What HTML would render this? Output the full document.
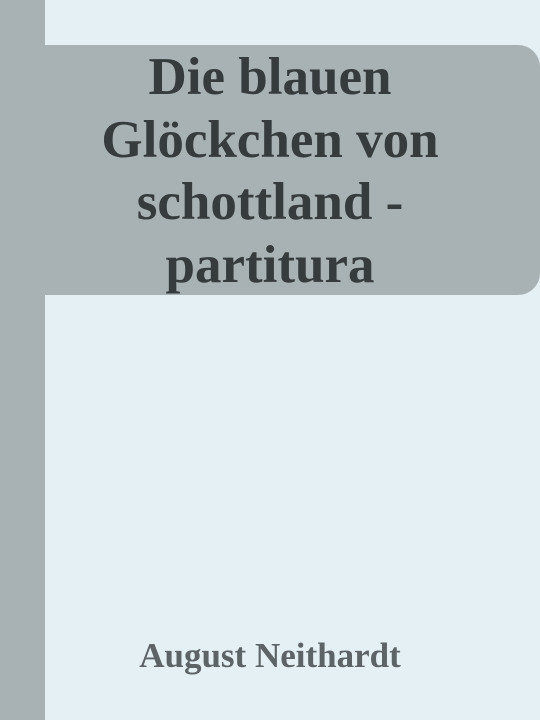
<!DOCTYPE html>
<html><head><meta charset="utf-8"><style>
html,body{margin:0;padding:0}
body{width:540px;height:720px;background:#e5f0f5;position:relative;overflow:hidden;font-family:"Liberation Serif",serif}
.bar{position:absolute;left:0;top:0;width:45px;height:720px;background:#a8b1b3}
.box{position:absolute;left:45px;top:45px;width:495px;height:250px;background:#a8b1b3;border-radius:0 22px 22px 0}
.title{position:absolute;left:45px;top:46px;width:450px;text-align:center;font-weight:bold;font-size:53px;line-height:62.5px;color:#363b3e}
.author{position:absolute;left:45px;top:636px;width:450px;text-align:center;font-weight:bold;font-size:35px;color:#5d6467}
</style></head><body>
<div class="bar"></div>
<div class="box"></div>
<div class="title">Die blauen<br>Glöckchen von<br>schottland -<br>partitura</div>
<div class="author">August Neithardt</div>
</body></html>
